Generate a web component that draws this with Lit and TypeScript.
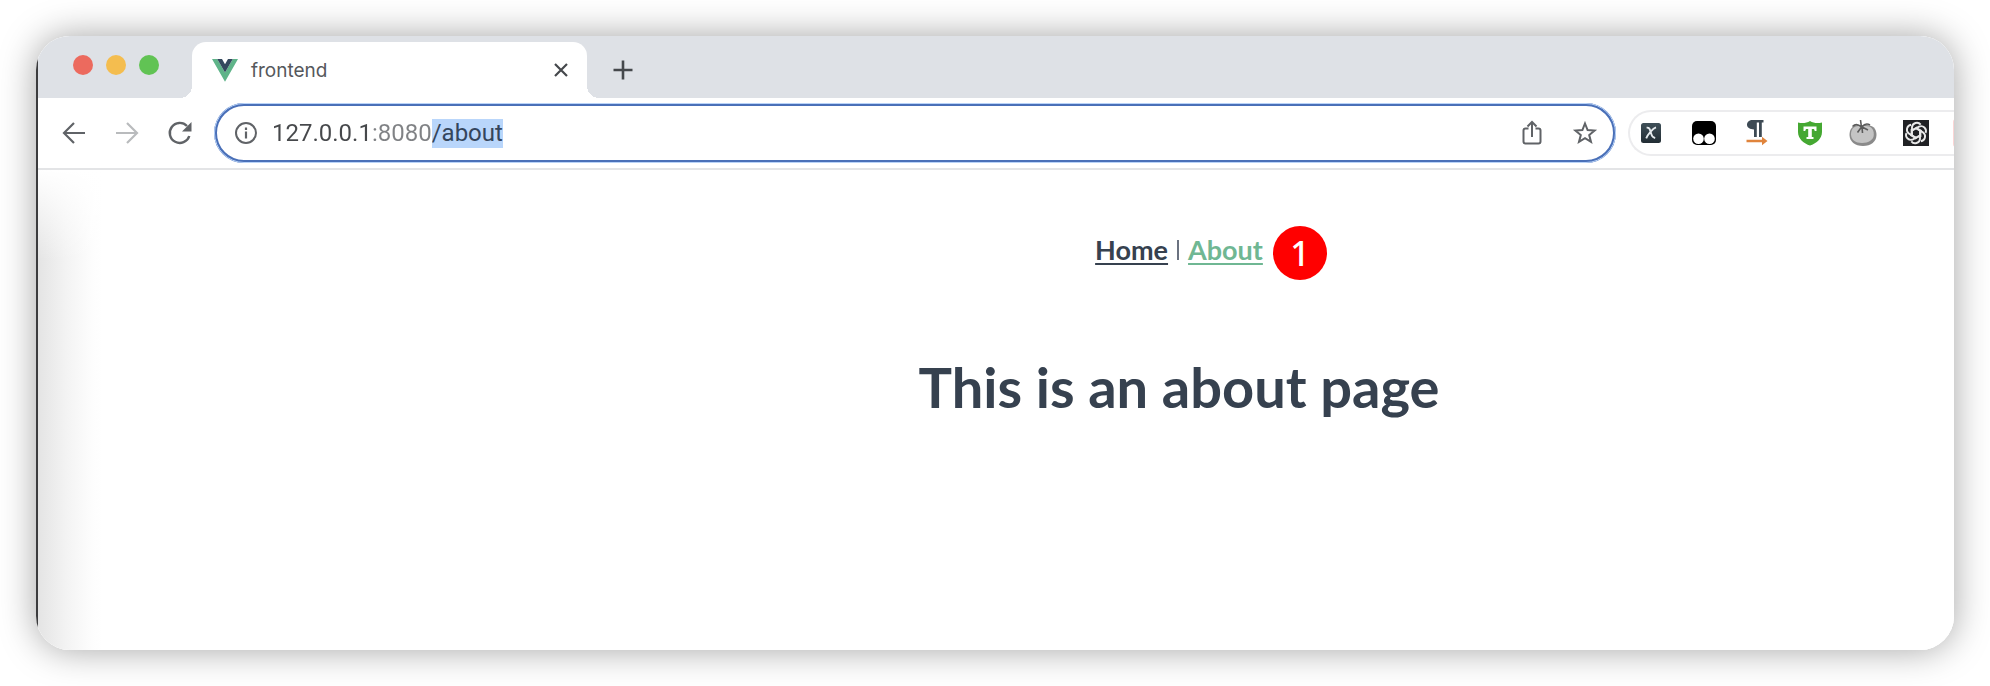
import { LitElement, html, css, svg } from "lit";
import { customElement, property, query } from "lit/decorators.js";

const vueLogo = svg`<svg width="26" height="23" viewBox="0 0 26 23" aria-hidden="true">
  <path d="M0 0H5.2L13 13.6 20.8 0H26L13 22.8Z" fill="#5fb489"/>
  <path d="M5.2 0H10L13 5.2 16 0H20.8L13 13.6Z" fill="#34495e"/></svg>`;

const extensions = [
  { name: "X", icon: svg`<svg width="26" height="26" viewBox="0 0 26 26">
      <defs><linearGradient id="xg" x1="0" y1="0" x2="0" y2="1"><stop offset="0" stop-color="#3f4f58"/><stop offset="1" stop-color="#222d34"/></linearGradient></defs>
      <rect x="3" y="3" width="20" height="20" rx="2.5" fill="url(#xg)"/>
      <path d="M8.6 7.6c2.6-.2 3 .9 4 4.2 1.200 4.200 1.800 5.600 4.600 6.200M18 7.400c-3 1-8 6.600-9.800 11" fill="none" stroke="#e6ebee" stroke-width="1.900"/></svg>` },
  { name: "Tampermonkey", icon: svg`<svg width="26" height="26" viewBox="0 0 26 26">
      <rect x="1" y="1" width="24" height="24" rx="5" fill="#000"/>
      <circle cx="7.500" cy="18.800" r="5.300" fill="#fff"/><circle cx="18.500" cy="18.800" r="5.300" fill="#fff"/></svg>` },
  { name: "Text direction", icon: svg`<svg width="26" height="26" viewBox="0 0 26 26">
      <path d="M8.500 0H19.500V2.500H17.800V17H15V2.500H12.800V17H10V9.500C6 9.500 3 7.500 3 4.800 3 2 5.500 0 8.500 0Z" fill="#3d4a54"/>
      <path d="M2.500 19.800H18V16.800L23.500 21 18 25.200V22.200H2.500Z" fill="#e0843c"/></svg>` },
  { name: "Shield", icon: svg`<svg width="26" height="26" viewBox="0 0 26 26">
      <path d="M13 1C9.500 3.300 5 3.500 1 2.500V12C1 19 7 23.500 13 25.500 19 23.500 25 19 25 12V2.500C21 3.500 16.500 3.300 13 1Z" fill="#45a832"/>
      <path d="M6.500 6.500H19.500V11H17.800L17 9H14.800V17H16.500V19H9.500V17H11.200V9H9L8.200 11H6.500Z" fill="#fff"/></svg>` },
  { name: "Tomato", icon: svg`<svg width="28" height="28" viewBox="0 0 28 28">
      <path d="M10 6C3 6 .500 10.500 .500 16 .500 22.500 6 27 14 27S27.500 22.500 27.500 16 24 6 17 6Z" fill="#8a8a8a"/>
      <path d="M10 7C4 7 2 11 2 15.500 2 20.500 6.500 24 13 24S24.800 21 24.800 15.500 22 7 17 7Z" fill="#c4c4c4"/>
      <path d="M12.500 8.500L11.500 1M12.500 8C9 5 6 5 3.500 7.500M12.500 8L8.500 13.500M13 8L13.500 14M13 8C16 4 18.500 4.500 21 6M13 8L19 11" fill="none" stroke="#5a5a5a" stroke-width="1.600"/></svg>` },
  { name: "ChatGPT", icon: svg`<svg width="28" height="28" viewBox="0 0 28 28">
      <rect x="1" y="1" width="26" height="26" fill="#202124"/>
      <g fill="none" stroke="#e8e8e8" stroke-width="1.900" stroke-linejoin="round">
        ${[0, 60, 120, 180, 240, 300].map(a => svg`<path transform="rotate(${a} 14 14)" d="M10 16V8.200a4.900 4.900 0 0 1 8.700-2.600M10 11.200l5.200-3"/>`)}
      </g></svg>` },
];

/** Tab strip with the window controls, one open tab and the new-tab button. */
@customElement("tab-strip")
export class TabStrip extends LitElement {
  @property() title = "";

  static styles = css`
    :host { display: flex; align-items: flex-end; height: 62px; background: #dee1e6; }
    button { border: 0; background: none; padding: 0; display: grid; place-items: center; }
    .lights { display: flex; gap: 13px; padding: 0 33px 23px 35px; }
    .light { width: 20px; height: 20px; border-radius: 50%; }
    .close { background: #ec6a5e; }
    .min { background: #f4bd4f; }
    .max { background: #61c354; }
    .tab { position: relative; box-sizing: border-box; display: flex; align-items: center; gap: 13px;
      width: 395px; height: 56px; padding: 0 16px 0 20px; background: #fff; border-radius: 14px 14px 0 0; }
    .tab::before, .tab::after { content: ""; position: absolute; bottom: 0; width: 12px; height: 12px; }
    .tab::before { right: 100%; background: radial-gradient(circle at 0 0, transparent 12px, #fff 12px); }
    .tab::after { left: 100%; background: radial-gradient(circle at 100% 0, transparent 12px, #fff 12px); }
    .title { flex: 1; padding-top: 2px; font: 19px/28px Inter, sans-serif; color: #55585c; }
    .x { width: 20px; height: 20px; }
    .new { width: 28px; height: 56px; margin-left: 22px; }
  `;

  render() {
    return html`
      <div class="lights">
        <button class="light close" aria-label="Close window"></button>
        <button class="light min" aria-label="Minimize window"></button>
        <button class="light max" aria-label="Zoom window"></button>
      </div>
      <div class="tab">
        ${vueLogo}
        <span class="title">${this.title}</span>
        <button class="x" aria-label="Close tab">
          <svg width="14" height="14" viewBox="0 0 14 14"><path d="M1 1L13 13M13 1L1 13" stroke="#45484c" stroke-width="2.200"/></svg>
        </button>
      </div>
      <button class="new" aria-label="New tab">
        <svg width="20" height="20" viewBox="0 0 20 20"><path d="M10 .5V19.500M.5 10H19.500" stroke="#45484c" stroke-width="2.600"/></svg>
      </button>`;
  }
}

/** Navigation buttons, the address field and the pinned extensions. */
@customElement("tool-bar")
export class ToolBar extends LitElement {
  @property() url = "";
  @query("input") private field!: HTMLInputElement;

  static styles = css`
    :host { display: flex; align-items: center; height: 70px; border-bottom: 2px solid #e3e4e6; overflow: hidden; }
    button { border: 0; background: none; padding: 0; display: grid; place-items: center; flex: none; }
    .nav { display: flex; gap: 25px; padding: 0 20px 0 22px; }
    .nav button { width: 28px; height: 28px; }
    .box { flex: 1; box-sizing: border-box; display: flex; align-items: center; height: 60px; padding: 0 14px 0 17px;
      border: 3px solid #4a70b8; border-radius: 30px; outline: 1px solid #b9d3f8; outline-offset: -1px; }
    .address { flex: 1; min-width: 0; margin-left: 14px; padding: 0; border: 0; outline: 0; height: 29px;
      font: 24px/29px Roboto, sans-serif; color: transparent;
      background: linear-gradient(90deg, #46484b 100px, #808285 100px); background-clip: text; -webkit-background-clip: text; }
    .address::selection { background: #b9d6fb; color: #34455c; }
    .action { width: 28px; height: 28px; }
    .share { margin-right: 25px; }
    .extensions { box-sizing: border-box; display: flex; align-items: center; gap: 25px; width: 326px; height: 46px;
      margin-left: 12px; padding-left: 7px; border: 2px solid #ececee; border-right: 0; border-radius: 23px 0 0 23px; overflow: hidden; }
    .ext { width: 28px; height: 28px; }
    .more { width: 28px; height: 28px; margin-left: -2px; background: #fbd5d5; border-radius: 3px; }
  `;

  firstUpdated() {
    this.field.focus();
    this.field.setSelectionRange(this.url.indexOf("/"), this.url.length);
  }

  render() {
    return html`
      <div class="nav">
        <button aria-label="Back"><svg width="28" height="28" viewBox="0 0 28 28" fill="none" stroke="#606367" stroke-width="2.200"><path d="M25 14H4.500M14 4L4 14 14 24"/></svg></button>
        <button aria-label="Forward"><svg width="28" height="28" viewBox="0 0 28 28" fill="none" stroke="#b9bbbd" stroke-width="2.200"><path d="M3 14H23.500M14 4L24 14 14 24"/></svg></button>
        <button aria-label="Reload"><svg width="28" height="28" viewBox="0 0 28 28"><path d="M23.300 17A10 10 0 1 1 21 7" fill="none" stroke="#606367" stroke-width="2.400"/><path d="M25.500 3V12.500H16Z" fill="#606367"/></svg></button>
      </div>
      <div class="box">
        <svg width="24" height="24" viewBox="0 0 24 24" aria-hidden="true"><circle cx="12" cy="12" r="10" fill="none" stroke="#606367" stroke-width="2"/><path d="M12 10.500V17.500M12 6.500V9" stroke="#606367" stroke-width="2.200"/></svg>
        <input class="address" aria-label="Address" spellcheck="false" .value=${this.url} />
        <button class="action share" aria-label="Share"><svg width="28" height="28" viewBox="0 0 28 28" fill="none" stroke="#606367" stroke-width="2"><path d="M10.500 9.500H7.500A2 2 0 0 0 5.500 11.500V22.500A2 2 0 0 0 7.500 24.500H20.500A2 2 0 0 0 22.500 22.500V11.500A2 2 0 0 0 20.500 9.500H17.500M14 18V3.500M9.500 7.500L14 3 18.500 7.500"/></svg></button>
        <button class="action" aria-label="Bookmark"><svg width="28" height="28" viewBox="0 0 28 28"><path d="M14 4.500L16.600 11 23.600 11.500 18.200 16 20 22.900 14 19.100 8 22.900 9.800 16 4.400 11.500 11.400 11Z" fill="none" stroke="#606367" stroke-width="2"/></svg></button>
      </div>
      <div class="extensions">
        ${extensions.map(e => html`<button class="ext" aria-label=${e.name}>${e.icon}</button>`)}
        <button class="more" aria-label="More"></button>
      </div>`;
  }
}

@customElement("about-page")
export class AboutPage extends LitElement {
  static styles = css`
    :host { display: block; flex: 1; padding: 63px 0 64px 366px; text-align: center; color: #36414f;
      font-family: Lato, sans-serif;
      background: linear-gradient(#fff, transparent 90px), linear-gradient(90deg, #e4e4e4, #f3f3f3 28px, #fdfdfd 54px, #fff 64px); }
    nav { display: flex; justify-content: center; align-items: center; gap: 9px; font-size: 27px; line-height: 34px; }
    a { font-weight: 700; color: inherit; text-decoration: underline 2px; text-underline-offset: 3px; }
    .current { position: relative; color: #6fb793; }
    .bar { width: 2px; height: 20px; background: #6b7280; }
    .badge { position: absolute; left: calc(100% + 10px); top: -7px; width: 54px; height: 54px; border-radius: 50%;
      background: #f00; color: #fff; font: 500 34px/54px "Noto Sans", sans-serif; }
    h1 { margin: 88px 0 0; font-size: 56px; line-height: 64px; font-weight: 700; }
  `;

  render() {
    return html`
      <nav>
        <a href="#/">Home</a><span class="bar"></span>
        <span class="current"><a href="#/about">About</a><span class="badge">1</span></span>
      </nav>
      <h1>This is an about page</h1>`;
  }
}

@customElement("app-root")
export class AppRoot extends LitElement {
  static styles = css`
    :host { display: flex; box-sizing: border-box; min-height: 100vh; padding: 36px; background: #fff; }
    .window { flex: 1; min-width: 0; display: flex; flex-direction: column; padding-left: 2px;
      border-radius: 34px; overflow: hidden; background: linear-gradient(90deg, #3c3c3e 2px, #fff 2px);
      box-shadow: 0 0 36px rgba(0, 0, 0, .36); }
  `;

  render() {
    return html`<main class="window">
      <tab-strip title="frontend"></tab-strip>
      <tool-bar url="127.0.0.1:8080/about"></tool-bar>
      <about-page></about-page>
    </main>`;
  }
}
